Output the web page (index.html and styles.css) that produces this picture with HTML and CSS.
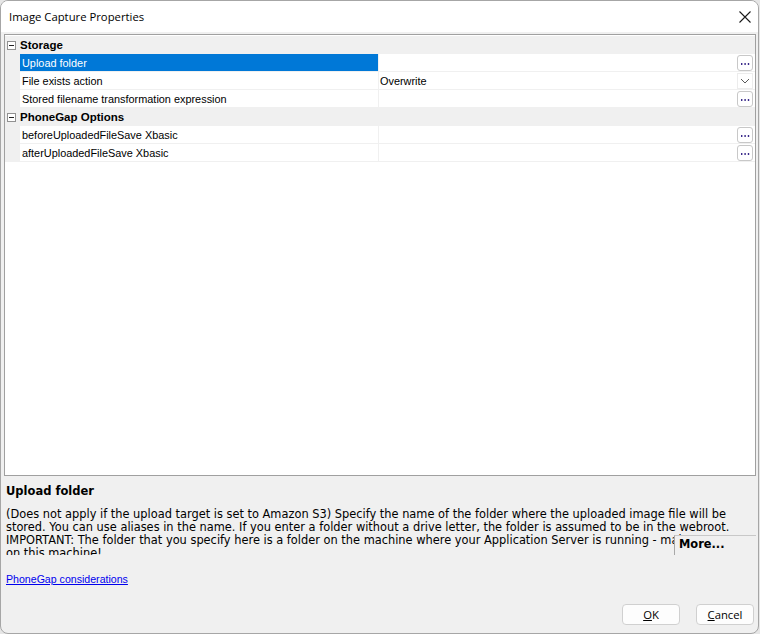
FILE: index.html
```html
<!DOCTYPE html>
<html>
<head>
<meta charset="utf-8">
<link rel="stylesheet" href="styles.css">
</head>
<body>
<div class="window">
  <div class="titlebar">
    <span class="title">Image Capture Properties</span>
    <svg class="close" width="12" height="12" viewBox="0 0 12 12"><path d="M0.5 0.5 L11.5 11.5 M11.5 0.5 L0.5 11.5" stroke="#1a1a1a" stroke-width="1.1" fill="none"/></svg>
  </div>
  <div class="content">
    <div class="grid">
      <div class="cat">
        <span class="toggle"><svg width="9" height="9" viewBox="0 0 9 9"><rect x="0.5" y="0.5" width="8" height="8" fill="#fff" stroke="#919191"/><path d="M2 4.5 H7" stroke="#222" stroke-width="1"/></svg></span>
        <span class="cat-name">Storage</span>
      </div>
      <div class="row selected">
        <div class="name">Upload folder</div>
        <div class="value"><span class="ell"><svg width="14" height="14" viewBox="0 0 14 14"><rect x="3" y="7" width="1.4" height="2" fill="#3a2a8a"/><rect x="6.4" y="7" width="1.4" height="2" fill="#3a2a8a"/><rect x="9.8" y="7" width="1.4" height="2" fill="#3a2a8a"/></svg></span></div>
      </div>
      <div class="row">
        <div class="name">File exists action</div>
        <div class="value"><span class="val-text">Overwrite</span><span class="drop"><svg width="10" height="6" viewBox="0 0 10 6"><path d="M1 1 L5 5 L9 1" stroke="#5a5a5a" stroke-width="1" fill="none"/></svg></span></div>
      </div>
      <div class="row">
        <div class="name">Stored filename transformation expression</div>
        <div class="value"><span class="ell"><svg width="14" height="14" viewBox="0 0 14 14"><rect x="3" y="7" width="1.4" height="2" fill="#3a2a8a"/><rect x="6.4" y="7" width="1.4" height="2" fill="#3a2a8a"/><rect x="9.8" y="7" width="1.4" height="2" fill="#3a2a8a"/></svg></span></div>
      </div>
      <div class="cat">
        <span class="toggle"><svg width="9" height="9" viewBox="0 0 9 9"><rect x="0.5" y="0.5" width="8" height="8" fill="#fff" stroke="#919191"/><path d="M2 4.5 H7" stroke="#222" stroke-width="1"/></svg></span>
        <span class="cat-name">PhoneGap Options</span>
      </div>
      <div class="row">
        <div class="name">beforeUploadedFileSave Xbasic</div>
        <div class="value"><span class="ell"><svg width="14" height="14" viewBox="0 0 14 14"><rect x="3" y="7" width="1.4" height="2" fill="#3a2a8a"/><rect x="6.4" y="7" width="1.4" height="2" fill="#3a2a8a"/><rect x="9.8" y="7" width="1.4" height="2" fill="#3a2a8a"/></svg></span></div>
      </div>
      <div class="row">
        <div class="name">afterUploadedFileSave Xbasic</div>
        <div class="value"><span class="ell"><svg width="14" height="14" viewBox="0 0 14 14"><rect x="3" y="7" width="1.4" height="2" fill="#3a2a8a"/><rect x="6.4" y="7" width="1.4" height="2" fill="#3a2a8a"/><rect x="9.8" y="7" width="1.4" height="2" fill="#3a2a8a"/></svg></span></div>
      </div>
    </div>
    <div class="desc">
      <div class="desc-title">Upload folder</div>
      <div class="desc-wrap">
        <div class="desc-text">(Does not apply if the upload target is set to Amazon S3) Specify the name of the folder where the uploaded image file will be<br>stored. You can use aliases in the name. If you enter a folder without a drive letter, the folder is assumed to be in the webroot.<br>IMPORTANT: The folder that you specify here is a folder on the machine where your Application Server is running - make sure<br>on this machine!</div>
        <div class="more">More...</div>
      </div>
      <a class="link" href="#">PhoneGap considerations</a>
    </div>
    <div class="buttons">
      <button class="btn"><u>O</u>K</button>
      <button class="btn"><u>C</u>ancel</button>
    </div>
  </div>
</div>
</body>
</html>
```

FILE: styles.css
```css
html, body {
  margin: 0;
  padding: 0;
  background: #e6e6e6;
}

.window {
  width: 757px;
  height: 632px;
  border: 1px solid #a6a6a6;
  border-radius: 8px;
  overflow: hidden;
  display: flex;
  flex-direction: column;
  background: #f0f0f0;
}

.titlebar {
  height: 31px;
  flex: none;
  background: #ffffff;
  display: flex;
  align-items: center;
  justify-content: space-between;
  padding: 0 7px 0 8px;
  font-family: "Open Sans", "Noto Sans", sans-serif;
  font-size: 11.3px;
  color: #000;
}

.title {
  margin-top: -1px;
}

.close {
  display: block;
}

.content {
  flex: 1;
  display: flex;
  flex-direction: column;
  padding: 2px 2px 0 3px;
}

.grid {
  flex: none;
  height: 440px;
  border: 1px solid #a0a0a0;
  background: #ffffff;
  font-family: "Liberation Sans", Arial, sans-serif;
  font-size: 10.9px;
  color: #000;
  display: flex;
  flex-direction: column;
}

.cat {
  height: 18px;
  background: #f0f0f0;
  display: flex;
  align-items: center;
}

.grid .cat:first-child {
  margin-top: 1px;
}

.toggle {
  width: 15px;
  display: flex;
  justify-content: flex-start;
  padding-left: 2px;
  box-sizing: border-box;
}

.toggle svg {
  display: block;
}

.cat-name {
  font-weight: bold;
  font-size: 11.5px;
}

.row {
  height: 18px;
  background: #f0f0f0;
  display: grid;
  grid-template-columns: 358px 1fr;
  column-gap: 1px;
  padding-left: 15px;
  box-sizing: border-box;
}

.name, .value {
  height: 17px;
  background: #ffffff;
  display: flex;
  align-items: center;
}

.name {
  padding-left: 2px;
  white-space: nowrap;
}

.selected .name {
  background: #0078d7;
  color: #ffffff;
}

.value {
  justify-content: space-between;
  padding-left: 1px;
  padding-right: 2px;
}

.val-text {
  flex: 1;
}

.ell {
  margin-left: auto;
  width: 14px;
  height: 14px;
  border: 1px solid #c8c8c8;
  border-radius: 3px;
  background: #fff;
  display: block;
}

.ell svg {
  display: block;
}

.drop {
  width: 16px;
  height: 16px;
  box-sizing: border-box;
  border: 1px solid #ececec;
  display: flex;
  align-items: center;
  justify-content: center;
}

.drop svg {
  display: block;
}

.desc {
  flex: none;
  padding-left: 2px;
  display: flex;
  flex-direction: column;
  align-items: flex-start;
}

.desc-title {
  margin-top: 8px;
  height: 14px;
  line-height: 14px;
  font-family: "DejaVu Sans", Verdana, sans-serif;
  font-weight: bold;
  font-size: 11.5px;
  color: #000;
}

.desc-wrap {
  position: relative;
  margin-top: 10px;
  height: 47px;
  width: 750px;
  overflow: hidden;
}

.desc-text {
  font-family: "DejaVu Sans", Verdana, sans-serif;
  font-size: 11.4px;
  line-height: 13px;
  color: #000;
  white-space: nowrap;
}

.more {
  position: absolute;
  left: 668px;
  top: 27px;
  width: 82px;
  height: 30px;
  background: #f0f0f0;
  border-top: 1px solid #c8c8c8;
  border-left: 1px solid #a8a8a8;
  box-sizing: border-box;
  padding: 1px 0 0 4px;
  font-family: "DejaVu Sans", Verdana, sans-serif;
  font-weight: bold;
  font-size: 11.4px;
  line-height: 14px;
  color: #000;
}

.link {
  margin-top: 17px;
  font-family: "Liberation Sans", Arial, sans-serif;
  font-size: 10.6px;
  line-height: 14px;
  color: #0000ee;
  text-decoration: underline;
}

.buttons {
  flex: none;
  display: flex;
  justify-content: flex-end;
  gap: 16px;
  margin-top: 18px;
  padding-right: 2px;
}

.btn {
  width: 58px;
  height: 21px;
  box-sizing: border-box;
  border: 1px solid #d0d0d0;
  border-radius: 4px;
  background: #fdfdfd;
  font-family: "Open Sans", "Noto Sans", sans-serif;
  font-size: 11.3px;
  color: #000;
  padding: 0;
  line-height: 18px;
}
```
